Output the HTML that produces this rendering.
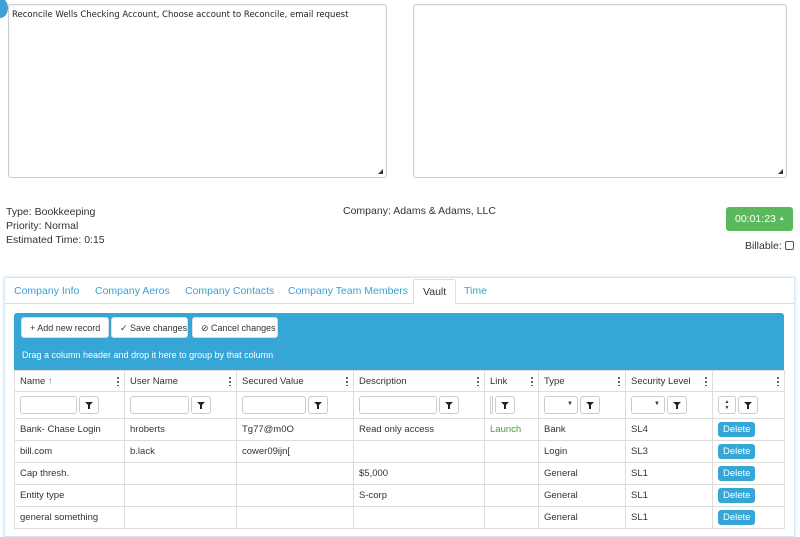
<!DOCTYPE html>
<html><head><style>
*{box-sizing:border-box;margin:0;padding:0}
body{width:800px;height:520px;overflow:hidden;background:#fff;font-family:"Liberation Sans",sans-serif;font-size:10px;color:#333;position:relative}
.ta{position:absolute;border:1px solid #ccc;border-radius:3px;background:#fff;box-shadow:inset 0 1px 2px rgba(0,0,0,.05)}
.grip{position:absolute;right:3px;bottom:3px;width:0;height:0;border-left:5px solid transparent;border-bottom:5px solid #333}
.abs{position:absolute}
.panel{position:absolute;left:4px;top:277px;width:791px;height:260px;border:1px solid #d6e6f2;box-shadow:0 0 3px #cde;background:#fff}
.tabs{position:absolute;left:0;top:0;width:100%;height:26px;border-bottom:1px solid #ddd}
.tab{position:absolute;top:7px;color:#3aa0d5;font-size:10.5px;white-space:nowrap}
.vault{position:absolute;left:408px;top:1px;width:43px;height:26px;border:1px solid #ddd;border-bottom:1px solid #fff;border-radius:3px 3px 0 0;background:#fff;color:#333;font-size:10.5px;padding:6px 0 0 9px}
.bar{position:absolute;left:14px;top:313px;width:770px;height:58px;background:#35a6d6;border-radius:3px 3px 0 0}
.btn{position:absolute;top:4px;height:21px;background:#fff;border:1px solid #ddd;border-radius:3px;font-size:9px;color:#333;padding:5px 0 0 8px;white-space:nowrap}
table{position:absolute;left:14px;top:370px;border-collapse:collapse;table-layout:fixed;width:770px}
td{border:1px solid #ddd;height:22px;padding:0 5px;font-size:9.5px;white-space:nowrap;overflow:hidden;position:relative}
tr.h td{height:21px}
tr.f td{height:27px}
.k{position:absolute;right:5px;top:5px;width:2px;height:10px;background:radial-gradient(circle,#555 1px,transparent 1.2px) 0 0/2px 4px}
.in{display:inline-block;vertical-align:middle;height:18px;border:1px solid #ccc;border-radius:3px;background:#fff}
.fb{display:inline-block;vertical-align:middle;width:20px;height:18px;border:1px solid #ccc;border-radius:3px;margin-left:2px;position:relative}
.fb:after{content:"";position:absolute;left:5px;top:5px;border-left:4px solid transparent;border-right:4px solid transparent;border-top:4px solid #222}
.fb:before{content:"";position:absolute;left:8px;top:8px;width:2px;height:4px;background:#222}
.del{display:inline-block;background:#35a6d6;color:#fff;border-radius:3px;padding:2px 5px;font-size:9.5px}
</style></head><body>
<div class="abs" style="left:-8px;top:-2px;width:16px;height:20px;border-radius:50%;background:#3aa0d5"></div>
<div class="ta" style="left:8px;top:4px;width:379px;height:174px"><div style="padding:5px 0 0 3px;font-family:'DejaVu Sans',sans-serif;font-size:8.5px;color:#222">Reconcile Wells Checking Account, Choose account to Reconcile, email request</div><div class="grip"></div></div>
<div class="ta" style="left:413px;top:4px;width:374px;height:174px"><div class="grip"></div></div>
<div class="abs" style="left:6px;top:205px;font-size:10.5px;line-height:14px">Type: Bookkeeping<br>Priority: Normal<br>Estimated Time: 0:15</div>
<div class="abs" style="left:343px;top:205px;font-size:10.5px">Company: Adams &amp; Adams, LLC</div>
<div class="abs" style="left:726px;top:207px;width:67px;height:24px;background:#5cb85c;border-radius:3px;color:#fff;font-size:10.5px;padding:6px 0 0 9px">00:01:23 <span style="font-size:6px;vertical-align:2px">▲</span></div>
<div class="abs" style="left:745px;top:240px;font-size:10.5px">Billable: <span style="display:inline-block;width:9px;height:9px;border:1px solid #555;border-radius:2px;vertical-align:-1px"></span></div>
<div class="panel"><div class="tabs">
<span class="tab" style="left:9px">Company Info</span><span class="tab" style="left:90px">Company Aeros</span><span class="tab" style="left:180px">Company Contacts</span><span class="tab" style="left:283px">Company Team Members</span>
<div class="vault">Vault</div><span class="tab" style="left:459px">Time</span></div></div>
<div class="bar">
<div class="btn" style="left:7px;width:88px">+ Add new record</div>
<div class="btn" style="left:97px;width:77px">✓ Save changes</div>
<div class="btn" style="left:178px;width:86px">⊘ Cancel changes</div>
<div class="abs" style="left:8px;top:37px;color:#fff;font-size:9px">Drag a column header and drop it here to group by that column</div>
</div>
<table>
<colgroup><col style="width:110px"><col style="width:112px"><col style="width:117px"><col style="width:131px"><col style="width:54px"><col style="width:87px"><col style="width:87px"><col style="width:72px"></colgroup>
<tr class="h"><td>Name <span style="color:#3aa0d5">↑</span><i class="k"></i></td><td>User Name<i class="k"></i></td><td>Secured Value<i class="k"></i></td><td>Description<i class="k"></i></td><td>Link<i class="k"></i></td><td>Type<i class="k"></i></td><td>Security Level<i class="k"></i></td><td><i class="k"></i></td></tr>
<tr class="f"><td><span class="in" style="width:57px"></span><span class="fb"></span></td><td><span class="in" style="width:59px"></span><span class="fb"></span></td><td><span class="in" style="width:64px"></span><span class="fb"></span></td><td><span class="in" style="width:78px"></span><span class="fb"></span></td><td><span class="in" style="width:3px"></span><span class="fb"></span></td><td><span class="in" style="width:34px;text-align:right;font-size:6px;padding:4px 4px 0 0">▼</span><span class="fb"></span></td><td><span class="in" style="width:34px;text-align:right;font-size:6px;padding:4px 4px 0 0">▼</span><span class="fb"></span></td><td><span class="in" style="width:18px;font-size:5px;line-height:6px;text-align:center;padding-top:2px">▲<br>▼</span><span class="fb"></span></td></tr>
<tr><td>Bank- Chase Login</td><td>hroberts</td><td>Tg77@m0O</td><td>Read only access</td><td style="color:#4a9a3a">Launch</td><td>Bank</td><td>SL4</td><td><span class="del">Delete</span></td></tr>
<tr><td>bill.com</td><td>b.lack</td><td>cower09ijn[</td><td></td><td></td><td>Login</td><td>SL3</td><td><span class="del">Delete</span></td></tr>
<tr><td>Cap thresh.</td><td></td><td></td><td>$5,000</td><td></td><td>General</td><td>SL1</td><td><span class="del">Delete</span></td></tr>
<tr><td>Entity type</td><td></td><td></td><td>S-corp</td><td></td><td>General</td><td>SL1</td><td><span class="del">Delete</span></td></tr>
<tr><td>general something</td><td></td><td></td><td></td><td></td><td>General</td><td>SL1</td><td><span class="del">Delete</span></td></tr>
</table>
</body></html>
